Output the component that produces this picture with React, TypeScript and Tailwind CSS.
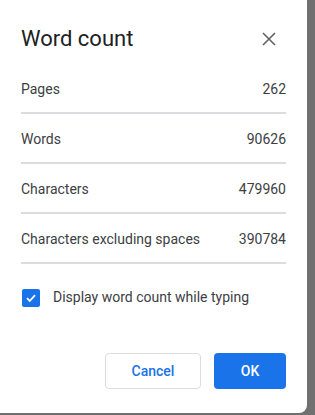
const ROWS = [
  { label: "Pages", value: "262" },
  { label: "Words", value: "90626" },
  { label: "Characters", value: "479960" },
  { label: "Characters excluding spaces", value: "390784" },
];

export default function App() {
  return (
    <div
      className="w-[315px] h-[415px] bg-[#707070] overflow-hidden"
      style={{ fontFamily: "Roboto, 'Liberation Sans', sans-serif" }}
    >
      <div className="w-[307px] h-[413px] bg-white rounded-br-[8px] flex flex-col pl-[21px] pr-[21px]">
        {/* Header */}
        <div className="flex items-center justify-between pt-[21px] h-[56px]">
          <h1 className="text-[22px] leading-[28px] text-[#202124]">Word count</h1>
          <button className="w-[24px] h-[24px] flex items-center justify-center mr-[5px] text-[#5f6368]">
            <svg width="14" height="14" viewBox="0 0 14 14" fill="none">
              <path d="M1 1L13 13M13 1L1 13" stroke="currentColor" strokeWidth="1.6" />
            </svg>
          </button>
        </div>

        {/* Stats */}
        <div className="mt-[8px] flex flex-col">
          {ROWS.map((row) => (
            <div
              key={row.label}
              className="flex items-center justify-between h-[50px] border-b-2 border-[#dadce0] text-[14px] text-[#3c4043] pt-[2px]"
            >
              <span>{row.label}</span>
              <span>{row.value}</span>
            </div>
          ))}
        </div>

        {/* Checkbox */}
        <label className="flex items-center mt-[23px] text-[14px] text-[#3c4043]">
          <span className="w-[18px] h-[18px] ml-[1px] rounded-[2px] bg-[#1a73e8] flex items-center justify-center">
            <svg width="12" height="12" viewBox="0 0 12 12" fill="none">
              <path d="M2 6.2L4.8 9L10 3.2" stroke="white" strokeWidth="1.8" />
            </svg>
          </span>
          <span className="ml-[13px]">Display word count while typing</span>
        </label>

        {/* Actions */}
        <div className="flex justify-end gap-[13px] mt-[45px]">
          <button className="w-[96px] h-[36px] rounded-[4px] border border-[#dadce0] text-[14px] font-medium text-[#1a73e8]">
            Cancel
          </button>
          <button className="w-[72px] h-[36px] rounded-[4px] bg-[#1a73e8] text-[14px] font-medium text-white">
            OK
          </button>
        </div>
      </div>
    </div>
  );
}
